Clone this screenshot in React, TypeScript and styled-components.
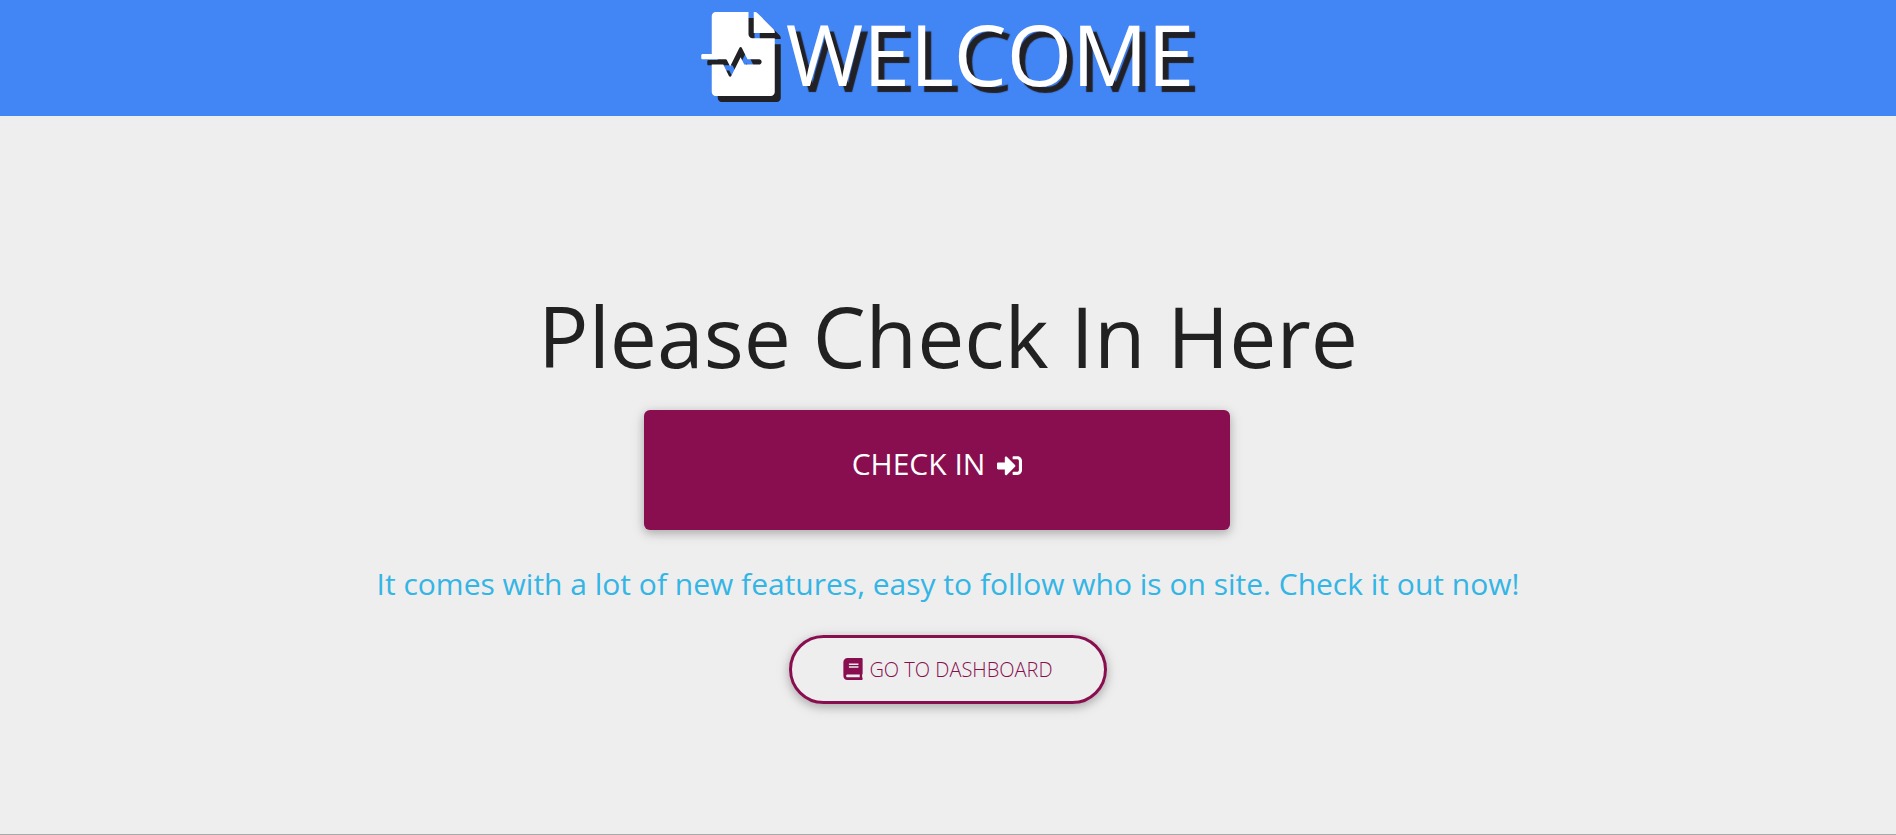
import React from "react";
import styled, { createGlobalStyle } from "styled-components";
import { FaBook, FaFileMedicalAlt, FaSignInAlt } from "react-icons/fa";

const GlobalStyle = createGlobalStyle`
  *, *::before, *::after { box-sizing: border-box; }
  body {
    margin: 0;
    background: #eeeeee;
    color: #212121;
    font-family: "Open Sans", "Noto Sans", sans-serif;
  }
`;

const Page = styled.div`
  display: flex;
  flex-direction: column;
  min-height: 100vh;
  border-bottom: 1px solid #aaaaaa;
`;

const Header = styled.header`
  display: flex;
  justify-content: center;
  padding: 4px 22px 12px 16px;
  background: #4285f4;
`;

const Brand = styled.h1`
  display: flex;
  align-items: center;
  gap: 6px;
  margin: 0;
  color: #ffffff;
  font-size: 84px;
  font-weight: 400;
  line-height: 100px;
  text-shadow: 6px 6px 1px #212025;

  svg {
    filter: drop-shadow(6px 6px 0 #212025);
  }
`;

const Main = styled.main`
  display: flex;
  flex: 1;
  flex-direction: column;
  align-items: center;
  justify-content: center;
  padding: 38px 16px 0;
  text-align: center;
`;

const Title = styled.h2`
  margin: 0 0 22px;
  font-size: 84px;
  font-weight: 400;
  line-height: 104px;
`;

const Button = styled.button`
  display: inline-flex;
  justify-content: center;
  border: 0;
  font-family: inherit;
  text-transform: uppercase;
  cursor: pointer;
  box-shadow: 0 3px 8px rgba(0, 0, 0, 0.2), 0 3px 15px rgba(0, 0, 0, 0.12);
`;

const CheckInButton = styled(Button)`
  gap: 12px;
  width: 586px;
  max-width: 100%;
  margin-right: 22px;
  padding: 34px 24px 46px;
  border-radius: 6px;
  background: #880e4f;
  color: #ffffff;
  font-size: 30px;
  line-height: 40px;

  svg {
    align-self: center;
    width: 25px;
    height: 25px;
    margin-top: 2px;
  }
`;

const Tagline = styled.p`
  margin: 35px 0 32px;
  color: #33b5e5;
  font-size: 30px;
  font-weight: 400;
  line-height: 38px;
`;

const DashboardButton = styled(Button)`
  align-items: center;
  gap: 6px;
  padding: 16px 51px;
  border: 3px solid #880e4f;
  border-radius: 160px;
  background: transparent;
  color: #880e4f;
  font-size: 20px;
  font-weight: 300;
  line-height: 31px;

  svg {
    width: 20px;
    height: 22px;
    margin-bottom: 2px;
  }
`;

export default function App() {
  return (
    <Page>
      <GlobalStyle />
      <Header>
        <Brand>
          <FaFileMedicalAlt aria-hidden="true" />
          WELCOME
        </Brand>
      </Header>
      <Main>
        <Title>Please Check In Here</Title>
        <CheckInButton type="button">
          Check in
          <FaSignInAlt aria-hidden="true" />
        </CheckInButton>
        <Tagline>
          It comes with a lot of new features, easy to follow who is on site. Check it out now!
        </Tagline>
        <DashboardButton type="button">
          <FaBook aria-hidden="true" />
          Go to dashboard
        </DashboardButton>
      </Main>
    </Page>
  );
}
